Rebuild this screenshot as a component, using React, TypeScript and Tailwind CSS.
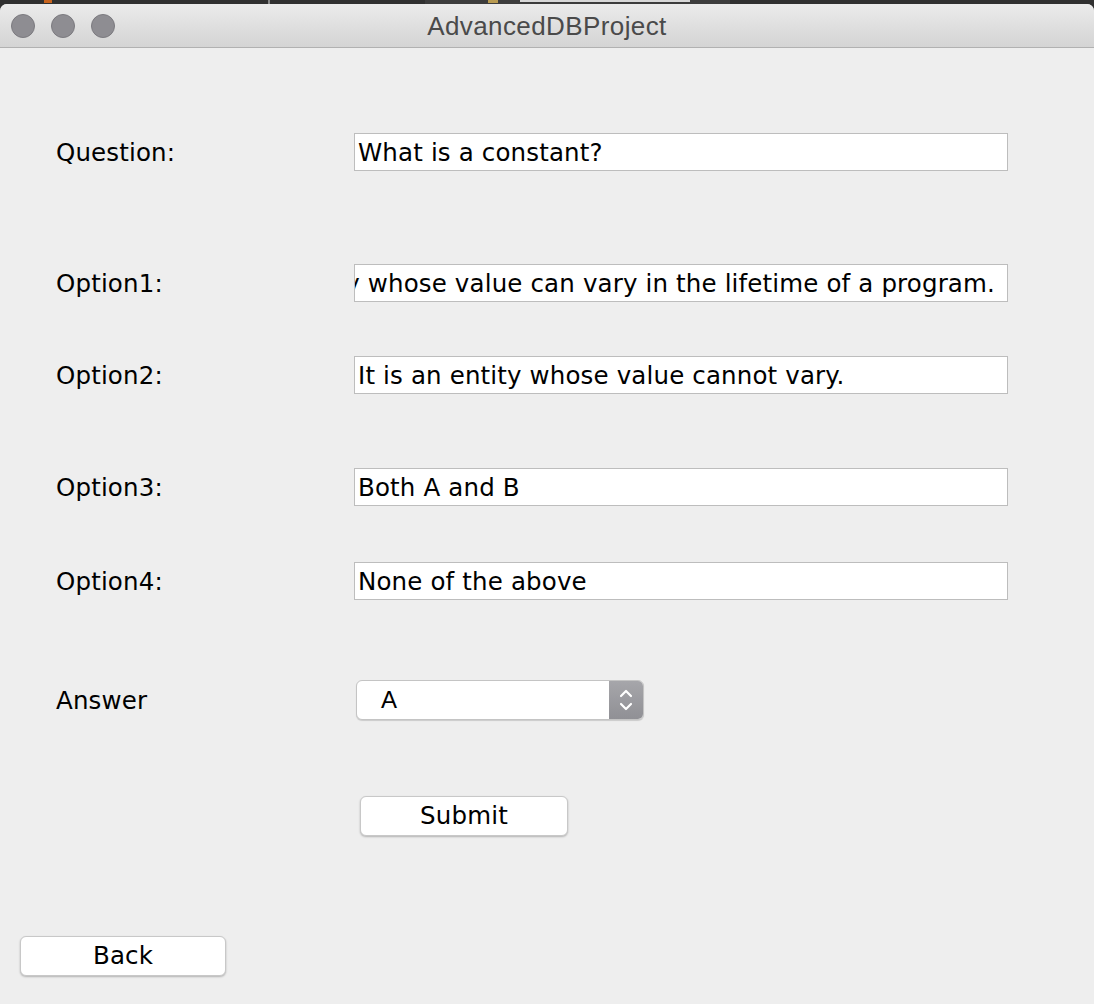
import React from "react";

const bodyFont = { fontFamily: '"DejaVu Sans", "Liberation Sans", sans-serif' };

function Field({ text, scrolled }: { text: string; scrolled?: boolean }) {
  return (
    <div
      className={
        "w-[654px] h-[38px] bg-white border border-[#bdbdbd] flex items-center overflow-hidden whitespace-nowrap text-[24.5px] tracking-[0.15px] text-black leading-none pt-[2px] " +
        (scrolled ? "justify-end pr-[12px]" : "pl-[3px]")
      }
    >
      <span className="shrink-0">{text}</span>
    </div>
  );
}

function Row({ label, children, mt }: { label: string; children: React.ReactNode; mt: string }) {
  return (
    <div className={"flex items-center " + mt}>
      <div className="w-[298px] text-[24.5px] tracking-[0.15px] text-black leading-none pt-[3px]">{label}</div>
      {children}
    </div>
  );
}

export default function App() {
  return (
    <div className="w-[1094px] h-[1004px] bg-[#303030] overflow-hidden" style={bodyFont}>
      <div className="h-[4px] flex relative">
        <div className="absolute left-[44px] top-0 w-[8px] h-[3px] bg-[#c8641e]" />
        <div className="absolute left-[268px] top-0 w-[2px] h-[4px] bg-[#888]" />
        <div className="absolute left-[425px] top-0 w-[305px] h-[4px] bg-[#3c3c3c]" />
        <div className="absolute left-[488px] top-0 w-[10px] h-[3px] bg-[#b89a50]" />
        <div className="absolute left-[520px] top-0 w-[170px] h-[2px] bg-[#d8d8d8]" />
      </div>
      <div className="h-[1000px] rounded-t-[7px] bg-[#eeeeee] overflow-hidden">
        {/* title bar */}
        <div className="h-[44px] bg-gradient-to-b from-[#ebebeb] to-[#d4d4d4] border-b border-[#b1b1b1] flex items-center relative">
          <div className="flex items-center gap-[16px] pl-[11px] pt-[1px]">
            <div className="w-[24px] h-[24px] rounded-full bg-[#8e8d92] border border-[#7b7a7f]" />
            <div className="w-[24px] h-[24px] rounded-full bg-[#8e8d92] border border-[#7b7a7f]" />
            <div className="w-[24px] h-[24px] rounded-full bg-[#8e8d92] border border-[#7b7a7f]" />
          </div>
          <div
            className="absolute inset-0 flex items-center justify-center text-[26px] tracking-[0.4px] text-[#4a4a4a] pt-[2px]"
            style={{ fontFamily: '"Liberation Sans", Arial, sans-serif' }}
          >
            AdvancedDBProject
          </div>
        </div>

        {/* body */}
        <div className="pl-[56px] pt-[85px]">
          <Row label="Question:" mt="">
            <Field text="What is a constant?" />
          </Row>
          <Row label="Option1:" mt="mt-[93px]">
            <Field text="It is an entity whose value can vary in the lifetime of a program." scrolled />
          </Row>
          <Row label="Option2:" mt="mt-[54px]">
            <Field text="It is an entity whose value cannot vary." />
          </Row>
          <Row label="Option3:" mt="mt-[74px]">
            <Field text="Both A and B" />
          </Row>
          <Row label="Option4:" mt="mt-[56px]">
            <Field text="None of the above" />
          </Row>
          <Row label="Answer" mt="mt-[80px]">
            <div className="ml-[2px] w-[288px] h-[40px] rounded-[6px] bg-white border border-[#c4c4c4] shadow-[0_1px_1px_rgba(0,0,0,0.15)] flex overflow-hidden">
              <div
                className="flex-1 flex items-center pl-[24px] text-[24px] text-black leading-none"
                style={{ fontFamily: '"Liberation Sans", Arial, sans-serif' }}
              >
                A
              </div>
              <div className="w-[34px] h-full bg-gradient-to-b from-[#a6a6aa] to-[#909095] flex items-center justify-center">
                <svg width="16" height="26" viewBox="0 0 16 26" fill="none" stroke="white" strokeWidth="2.2" strokeLinecap="round" strokeLinejoin="round">
                  <path d="M3 9 L8 4 L13 9" />
                  <path d="M3 17 L8 22 L13 17" />
                </svg>
              </div>
            </div>
          </Row>
          <div className="mt-[76px] pl-[304px]">
            <div className="w-[208px] h-[40px] rounded-[6px] bg-white border border-[#c8c8c8] shadow-[0_1px_2px_rgba(0,0,0,0.25)] flex items-center justify-center text-[24.5px] tracking-[0.15px] text-black leading-none">
              Submit
            </div>
          </div>
        </div>
        <div className="mt-[100px] pl-[20px]">
          <div className="w-[206px] h-[40px] rounded-[6px] bg-white border border-[#c8c8c8] shadow-[0_1px_2px_rgba(0,0,0,0.25)] flex items-center justify-center text-[24.5px] tracking-[0.15px] text-black leading-none">
            Back
          </div>
        </div>
      </div>
    </div>
  );
}
